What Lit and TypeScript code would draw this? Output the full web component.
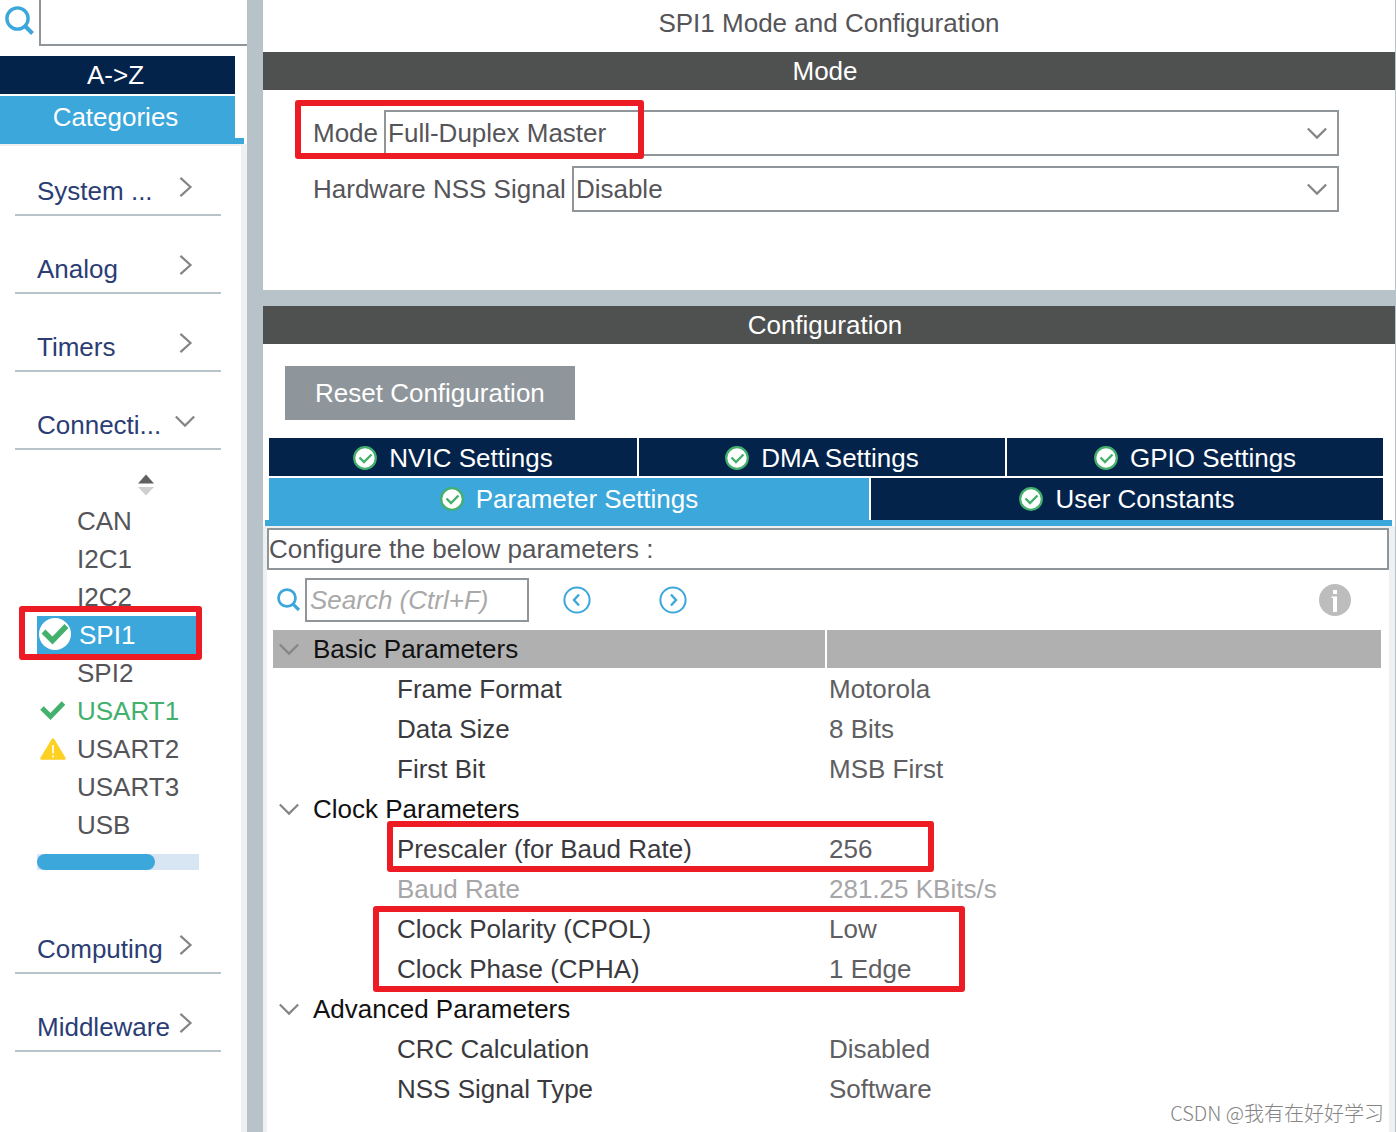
import { LitElement, html, css, svg, nothing } from "lit";
import { customElement, property, state } from "lit/decorators.js";
import { classMap } from "lit/directives/class-map.js";

type IconName =
  | "search" | "right" | "down" | "sort" | "ok-disc" | "check" | "warning"
  | "ok-ring" | "prev" | "next" | "info";

const shapes: Record<IconName, { box: string; body: unknown }> = {
  search: {
    box: "0 0 30 30",
    body: svg`<circle cx="12.500" cy="12.500" r="10.600" fill="none" stroke="#3ba7db" stroke-width="3.400"/>
      <path d="M19.500 19.500L27.500 27.500" stroke="#3ba7db" stroke-width="4"/>`,
  },
  right: { box: "0 0 24 24", body: svg`<path d="M7 2L18 12L7 22" fill="none" stroke="#858585" stroke-width="2.400"/>` },
  down: { box: "0 0 24 24", body: svg`<path d="M2 7L12 17L22 7" fill="none" stroke="#858585" stroke-width="2.400"/>` },
  sort: {
    box: "0 0 18 22",
    body: svg`<path d="M1 9.500L9 0.500L17 9.500z" fill="#606060"/><path d="M1 13L9 21.500L17 13z" fill="#cfcfcf"/>`,
  },
  "ok-disc": {
    box: "0 0 32 32",
    body: svg`<circle cx="16" cy="16" r="16" fill="#fff"/>
      <path d="M4.500 13.500L13.500 22.500L27.500 8" fill="none" stroke="#43b06d" stroke-width="5.500"/>`,
  },
  check: { box: "0 0 26 22", body: svg`<path d="M2 8L10.500 16.500L23.500 3" fill="none" stroke="#43b06d" stroke-width="5"/>` },
  warning: {
    box: "0 0 26 22",
    body: svg`<path d="M13 1.500L24.500 20.500H1.500z" fill="#fdd022" stroke="#fdd022" stroke-width="2.500" stroke-linejoin="round"/>
      <path d="M13 7V15.500M13 17.500V19.500" stroke="#fff" stroke-width="1.600"/>`,
  },
  "ok-ring": {
    box: "0 0 24 24",
    body: svg`<circle cx="12" cy="12" r="10.800" fill="#fff" stroke="#43b06d" stroke-width="2.200"/>
      <path d="M6.500 11.500L11 16L18.500 8.500" fill="none" stroke="#43b06d" stroke-width="2.400"/>`,
  },
  prev: {
    box: "0 0 28 28",
    body: svg`<circle cx="14" cy="14" r="12.600" fill="none" stroke="#3ba7db" stroke-width="2"/>
      <path d="M16 8.500L11 14L16 19.500" fill="none" stroke="#3ba7db" stroke-width="2.400"/>`,
  },
  next: {
    box: "0 0 28 28",
    body: svg`<circle cx="14" cy="14" r="12.600" fill="none" stroke="#3ba7db" stroke-width="2"/>
      <path d="M12 8.500L17 14L12 19.500" fill="none" stroke="#3ba7db" stroke-width="2.400"/>`,
  },
  info: {
    box: "0 0 32 32",
    body: svg`<circle cx="16" cy="16" r="16" fill="#bdbdbd"/>
      <rect x="14" y="6" width="4" height="4" fill="#fff"/><path d="M12.500 12.500H18V28H14V14H12.500z" fill="#fff"/>`,
  },
};

@customElement("cfg-icon")
export class CfgIcon extends LitElement {
  static styles = css`
    :host { display: inline-flex; flex: none; width: 24px; height: 24px; }
    .glyph { width: 100%; height: 100%; display: block; overflow: visible; }
  `;
  @property() name: IconName = "right";
  render() {
    const s = shapes[this.name];
    return html`<svg class="glyph" viewBox=${s.box} aria-hidden="true">${s.body}</svg>`;
  }
}

interface Peripheral { name: string; status?: "selected" | "enabled" | "conflict" }
interface Param { name: string; value: string; disabled?: boolean }
interface Group { name: string; params: Param[] }

const before = ["System ...", "Analog", "Timers"];
const after = ["Computing", "Middleware"];
const peripherals: Peripheral[] = [
  { name: "CAN" },
  { name: "I2C1" },
  { name: "I2C2" },
  { name: "SPI1", status: "selected" },
  { name: "SPI2" },
  { name: "USART1", status: "enabled" },
  { name: "USART2", status: "conflict" },
  { name: "USART3" },
  { name: "USB" },
];
const statusIcon: Record<string, IconName> = { selected: "ok-disc", enabled: "check", conflict: "warning" };

const groups: Group[] = [
  {
    name: "Basic Parameters",
    params: [
      { name: "Frame Format", value: "Motorola" },
      { name: "Data Size", value: "8 Bits" },
      { name: "First Bit", value: "MSB First" },
    ],
  },
  {
    name: "Clock Parameters",
    params: [
      { name: "Prescaler (for Baud Rate)", value: "256" },
      { name: "Baud Rate", value: "281.25 KBits/s", disabled: true },
      { name: "Clock Polarity (CPOL)", value: "Low" },
      { name: "Clock Phase (CPHA)", value: "1 Edge" },
    ],
  },
  {
    name: "Advanced Parameters",
    params: [
      { name: "CRC Calculation", value: "Disabled" },
      { name: "NSS Signal Type", value: "Software" },
    ],
  },
];

const base = css`
  :host {
    display: block;
    font: 26px/38px "Liberation Sans", Arial, sans-serif;
    color: #555559;
  }
  * { box-sizing: border-box; }
  button, input, select {
    font: inherit;
    color: inherit;
    margin: 0;
    padding: 0;
    border: 0;
    border-radius: 0;
    background: none;
    outline: none;
  }
  .mark { position: absolute; border: 6px solid #ed1c24; border-radius: 3px; pointer-events: none; }
`;

@customElement("category-pane")
export class CategoryPane extends LitElement {
  static styles = [base, css`
    :host { display: flex; flex-direction: column; background: #fff; }
    .search { display: flex; height: 46px; margin-bottom: 10px; }
    .search-label { width: 39px; padding: 6px 0 0 5px; }
    .search-icon { width: 30px; height: 30px; }
    .search-input { flex: 1; min-width: 0; border: solid #8f9599; border-width: 0 0 2px 2px; }
    .tabs { display: flex; flex-direction: column; gap: 2px; padding-right: 12px; }
    .tab { height: 38px; background: #03234b; color: #fff; padding-right: 4px; }
    .tab-active { height: 42px; background: #3ba7db; }
    .strip { height: 6px; margin-right: 3px; background: #3ba7db; }
    .body { border: solid #eff0f2; border-width: 2px 6px 0 0; padding: 22px 20px 0 15px; flex: 1; }
    .category {
      display: grid;
      grid-template-columns: 1fr 24px;
      align-items: center;
      width: 100%;
      height: 48px;
      padding: 0 24px 0 22px;
      margin-bottom: 30px;
      border-bottom: 2px solid #b7c2c9;
      color: #2b3d74;
      text-align: left;
      white-space: nowrap;
    }
    .category-open { margin-bottom: 0; }
    .chevron { justify-self: center; width: 22px; height: 22px; margin-bottom: 8px; }
    .open-panel { padding: 24px 22px 56px; }
    .sort { display: flex; justify-content: center; padding-left: 56px; height: 28px; }
    .sort-icon { width: 18px; height: 22px; }
    .list { list-style: none; margin: 0; padding: 0; }
    .item { position: relative; }
    .peripheral { display: grid; grid-template-columns: 40px 1fr; align-items: center; width: 100%; height: 38px; text-align: left; }
    .selected { background: #3ba7db; color: #fff; }
    .enabled { color: #43b06d; }
    .status { width: 26px; height: 22px; margin-left: 3px; }
    .status-selected { width: 32px; height: 32px; margin: 0 0 2px 2px; }
    .name { grid-column: 2; }
    .selected .name { padding-left: 2px; }
    .mark-item { left: -18px; right: -3px; top: -10px; bottom: -6px; z-index: 1; }
    .track { height: 16px; margin-top: 10px; background: #d8e6f3; }
    .thumb { width: 73%; height: 16px; border-radius: 8px; background: #3ba7db; }
  `];

  @state() private open = true;

  private category(name: string) {
    return html`<button class="category">${name}<cfg-icon class="chevron" name="right"></cfg-icon></button>`;
  }

  render() {
    return html`
      <div class="search">
        <label class="search-label" for="find" aria-label="Find peripheral"><cfg-icon class="search-icon" name="search"></cfg-icon></label>
        <input class="search-input" id="find" type="text" />
      </div>
      <div class="tabs">
        <button class="tab">A-&gt;Z</button>
        <button class="tab tab-active">Categories</button>
      </div>
      <div class="strip"></div>
      <nav class="body">
        ${before.map((n) => this.category(n))}
        <button class="category category-open" aria-expanded=${this.open} @click=${() => (this.open = !this.open)}>
          Connecti...<cfg-icon class="chevron" name=${this.open ? "down" : "right"}></cfg-icon>
        </button>
        ${this.open ? html`
          <div class="open-panel">
            <div class="sort"><cfg-icon class="sort-icon" name="sort"></cfg-icon></div>
            <ul class="list">
              ${peripherals.map((p) => html`
                <li class="item">
                  <button class="peripheral ${p.status ?? ""}">
                    ${p.status ? html`<cfg-icon
                      class=${classMap({ status: true, "status-selected": p.status === "selected" })}
                      name=${statusIcon[p.status]}></cfg-icon>` : nothing}
                    <span class="name">${p.name}</span>
                  </button>
                  ${p.status === "selected" ? html`<div class="mark mark-item"></div>` : nothing}
                </li>`)}
            </ul>
            <div class="track"><div class="thumb"></div></div>
          </div>` : nothing}
        ${after.map((n) => this.category(n))}
      </nav>
    `;
  }
}

@customElement("mode-panel")
export class ModePanel extends LitElement {
  static styles = [base, css`
    :host { background: #fff; }
    .title { margin: 0; padding: 4px 0 10px; font: inherit; text-align: center; }
    .bar { margin: 0; padding-right: 8px; background: #4f5150; color: #fff; font: inherit; text-align: center; }
    .form { position: relative; display: flex; flex-direction: column; gap: 10px; padding: 20px 56px 78px 50px; }
    .row { display: flex; align-items: center; gap: 6px; }
    .picker { flex: 1; display: grid; grid-template-columns: 1fr 42px; align-items: center; }
    .select { grid-area: 1 / 1 / 2 / 3; height: 46px; padding-left: 2px; border: 2px solid #8f9599; appearance: none; background: #fff; }
    .arrow { grid-area: 1 / 2; justify-self: center; width: 22px; height: 22px; margin-right: 2px; pointer-events: none; }
    .mark-mode { left: 32px; top: 10px; width: 349px; height: 59px; }
  `];
  render() {
    return html`
      <h1 class="title">SPI1 Mode and Configuration</h1>
      <h2 class="bar">Mode</h2>
      <div class="form">
        <div class="row">
          <label for="mode">Mode</label>
          <div class="picker">
            <select class="select" id="mode"><option>Full-Duplex Master</option></select>
            <cfg-icon class="arrow" name="down"></cfg-icon>
          </div>
        </div>
        <div class="row">
          <label for="nss">Hardware NSS Signal</label>
          <div class="picker">
            <select class="select" id="nss"><option>Disable</option></select>
            <cfg-icon class="arrow" name="down"></cfg-icon>
          </div>
        </div>
        <div class="mark mark-mode"></div>
      </div>
    `;
  }
}

@customElement("config-panel")
export class ConfigPanel extends LitElement {
  static styles = [base, css`
    :host { background: #fff; display: flex; flex-direction: column; }
    .bar { margin: 0; padding-right: 8px; background: #4f5150; color: #fff; font: inherit; text-align: center; }
    .reset { align-self: flex-start; height: 54px; padding: 0 30px; margin: 22px 0 18px 22px; background: #8f969b; color: #fff; }
    .tabs { display: flex; flex-direction: column; gap: 2px; padding: 0 12px 0 6px; }
    .tab-row { display: grid; gap: 2px; }
    .upper { grid-template-columns: 368fr 366fr 376fr; }
    .lower { grid-template-columns: 600fr 512fr; }
    .tab { display: flex; align-items: center; justify-content: center; gap: 12px; height: 38px; padding-top: 2px; background: #03234b; color: #fff; }
    .lower .tab { height: 42px; padding: 0; }
    .lower .active { background: #3ba7db; }
    .strip { height: 6px; margin: 0 3px 0 2px; background: #3ba7db; }
    .body { flex: 1; border: solid #eff0f2; border-width: 2px 6px 0 4px; padding-bottom: 22px; }
    .intro { margin: 0; border: 2px solid #8f9599; }
    .tools { display: flex; align-items: center; padding: 8px 38px 8px 10px; }
    .find-label { display: flex; width: 28px; }
    .find-icon { width: 24px; height: 24px; }
    .find { width: 224px; height: 44px; padding-left: 3px; border: 2px solid #8f9599; }
    .find::placeholder { color: #a9a9a9; font-style: italic; opacity: 1; }
    .step { display: flex; width: 28px; height: 28px; margin-left: 34px; }
    .step + .step { margin-left: 68px; }
    .step-icon { width: 28px; height: 28px; }
    .info { display: flex; margin-left: auto; }
    .info-icon { width: 32px; height: 32px; }
    .sheet { position: relative; margin: 0 8px 0 6px; }
    .table { width: 100%; border-collapse: separate; border-spacing: 0; table-layout: fixed; color: #3a3a3e; }
    .key-column { width: calc(50% + 2px); }
    .cell { height: 40px; padding: 0 0 0 2px; border-bottom: 2px solid #fff; font-weight: normal; text-align: left; color: #5f5f63; }
    .key { padding: 0 0 0 124px; border-right: 2px solid #fff; color: #3a3a3e; }
    .group { padding: 0; color: #111; }
    .current { background: #b0b0b0; }
    .muted { color: #a6a6a9; }
    .toggle { display: flex; align-items: center; height: 38px; padding-left: 5px; gap: 13px; }
    .toggle-icon { width: 22px; height: 22px; }
    .mark-prescaler { left: 114px; top: 191px; width: 547px; height: 51px; }
    .mark-clock { left: 100px; top: 276px; width: 592px; height: 86px; }
  `];

  private tab(label: string, cls = "") {
    return html`<button class="tab ${cls}"><cfg-icon name="ok-ring"></cfg-icon>${label}</button>`;
  }

  render() {
    return html`
      <h2 class="bar">Configuration</h2>
      <button class="reset">Reset Configuration</button>
      <div class="tabs">
        <div class="tab-row upper">${this.tab("NVIC Settings")}${this.tab("DMA Settings")}${this.tab("GPIO Settings")}</div>
        <div class="tab-row lower">${this.tab("Parameter Settings", "active")}${this.tab("User Constants")}</div>
      </div>
      <div class="strip"></div>
      <div class="body">
        <p class="intro">Configure the below parameters :</p>
        <div class="tools">
          <label class="find-label" for="search" aria-label="Search parameters"><cfg-icon class="find-icon" name="search"></cfg-icon></label>
          <input class="find" id="search" type="text" placeholder="Search (Ctrl+F)" />
          <button class="step" aria-label="Previous"><cfg-icon class="step-icon" name="prev"></cfg-icon></button>
          <button class="step" aria-label="Next"><cfg-icon class="step-icon" name="next"></cfg-icon></button>
          <button class="info" aria-label="Information"><cfg-icon class="info-icon" name="info"></cfg-icon></button>
        </div>
        <div class="sheet">
          <table class="table">
            <colgroup><col class="key-column" /><col /></colgroup>
            ${groups.map((g, i) => html`
              <tbody>
                <tr>
                  <th class=${classMap({ cell: true, key: true, group: true, current: i === 0 })} scope="rowgroup">
                    <button class="toggle" aria-expanded="true"><cfg-icon class="toggle-icon" name="down"></cfg-icon>${g.name}</button>
                  </th>
                  <td class=${classMap({ cell: true, current: i === 0 })}></td>
                </tr>
                ${g.params.map((p) => html`
                  <tr>
                    <th class=${classMap({ cell: true, key: true, muted: !!p.disabled })} scope="row">${p.name}</th>
                    <td class=${classMap({ cell: true, muted: !!p.disabled })}>${p.value}</td>
                  </tr>`)}
              </tbody>`)}
          </table>
          <div class="mark mark-prescaler"></div>
          <div class="mark mark-clock"></div>
        </div>
      </div>
    `;
  }
}

@customElement("app-root")
export class AppRoot extends LitElement {
  static styles = css`
    :host { display: block; position: relative; }
    .layout {
      display: grid;
      grid-template-columns: 247px minmax(0, 1fr);
      gap: 16px;
      min-height: 100vh;
      padding-right: 1px;
      box-sizing: border-box;
      background: #b7c2c9;
    }
    .main { display: flex; flex-direction: column; gap: 16px; }
    .config { flex: 1; }
    .credit {
      position: absolute;
      right: 12px;
      bottom: 4px;
      font: 300 20px/30px "Noto Sans CJK SC", sans-serif;
      color: #848484;
    }
  `;
  render() {
    return html`
      <div class="layout">
        <category-pane></category-pane>
        <main class="main">
          <mode-panel></mode-panel>
          <config-panel class="config"></config-panel>
        </main>
      </div>
      <div class="credit">CSDN @我有在好好学习</div>
    `;
  }
}
